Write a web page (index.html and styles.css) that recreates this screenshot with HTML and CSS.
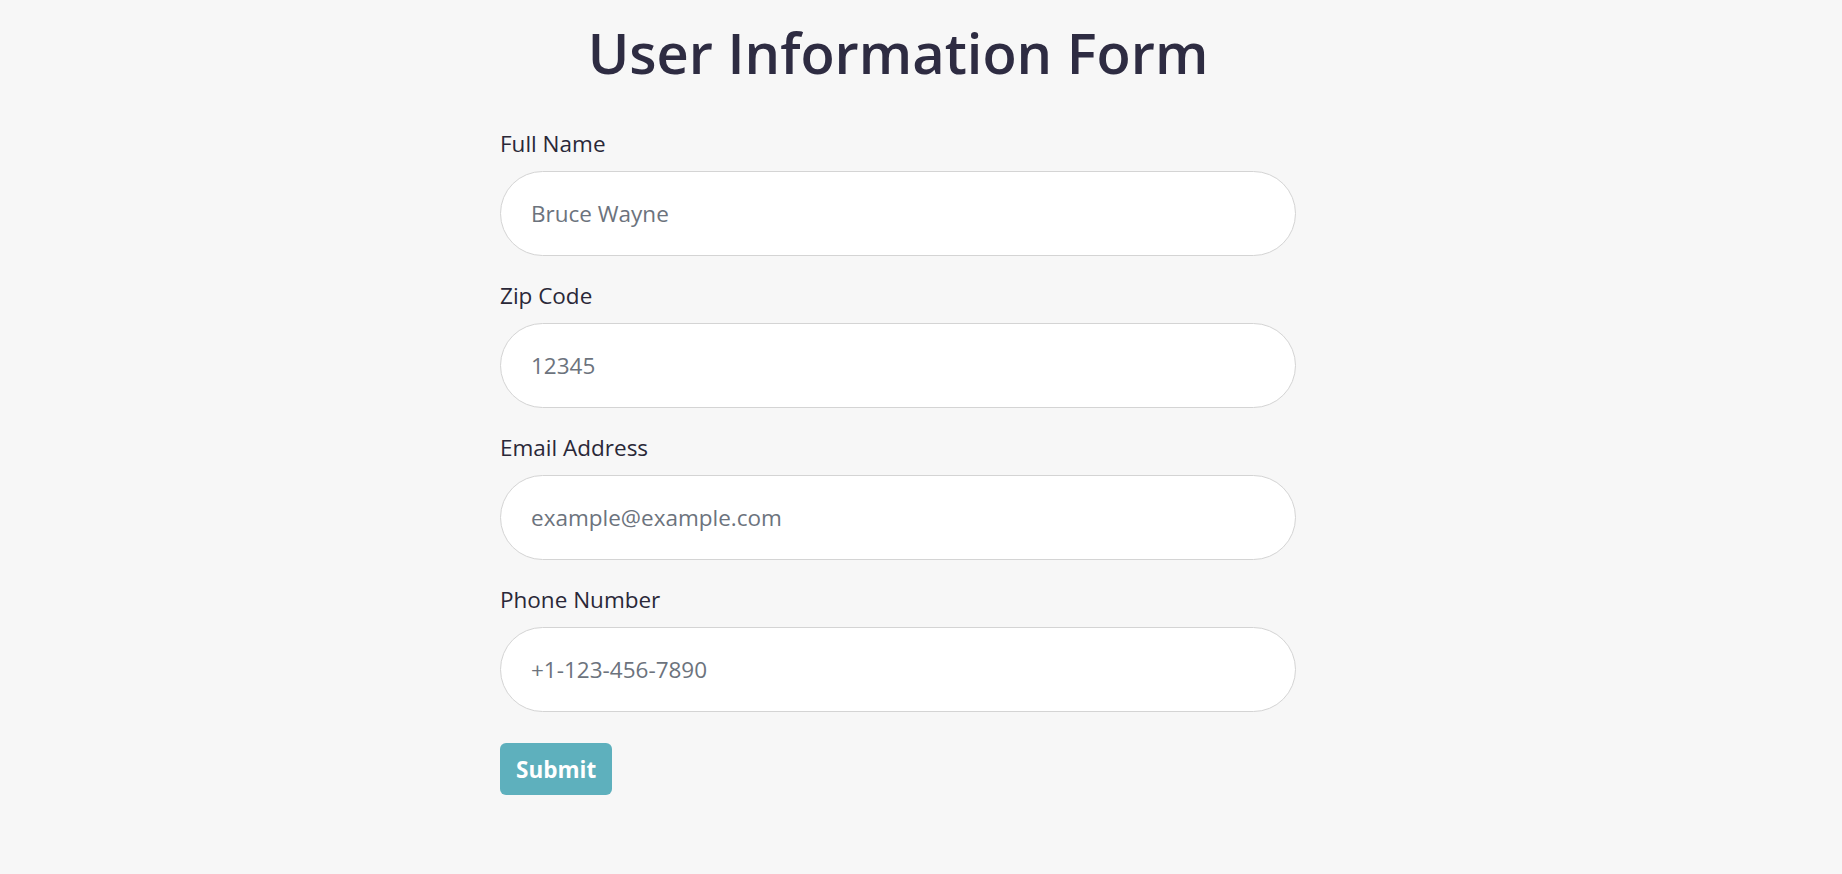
FILE: index.html
```html
<!DOCTYPE html>
<html lang="en">
<head>
<meta charset="utf-8">
<title>User Information Form</title>
<link rel="stylesheet" href="styles.css">
</head>
<body>
<main class="page">
  <h1 class="title">User Information Form</h1>
  <form class="form">
    <div class="field">
      <label class="label" for="name">Full Name</label>
      <input class="input" id="name" type="text" placeholder="Bruce Wayne">
    </div>
    <div class="field">
      <label class="label" for="zip">Zip Code</label>
      <input class="input" id="zip" type="text" placeholder="12345">
    </div>
    <div class="field">
      <label class="label" for="email">Email Address</label>
      <input class="input" id="email" type="email" placeholder="example@example.com">
    </div>
    <div class="field">
      <label class="label" for="phone">Phone Number</label>
      <input class="input" id="phone" type="tel" placeholder="+1-123-456-7890">
    </div>
    <button class="submit" type="submit">Submit</button>
  </form>
</main>
</body>
</html>
```

FILE: styles.css
```css
* { box-sizing: border-box; }
html, body { margin: 0; background: #f7f7f7; }
body {
  font-family: "Segoe UI", "Open Sans", sans-serif;
  color: #2a2838;
  padding-right: 46px;
}
.page {
  width: 796px;
  margin: 0 auto;
}
.title {
  margin: 0;
  padding-top: 12px;
  font-size: 56px;
  line-height: 80px;
  font-weight: 600;
  text-align: center;
  color: #2e2c42;
}
.form {
  margin-top: 37px;
  display: flex;
  flex-direction: column;
}
.field {
  display: flex;
  flex-direction: column;
}
.label {
  font-size: 22.5px;
  line-height: 30px;
  margin-bottom: 12px;
  color: #2a2838;
}
.input {
  height: 85px;
  border: 1px solid #d4d4d4;
  border-radius: 43px;
  background: #fff;
  padding: 0 30px;
  font-family: inherit;
  font-size: 22.5px;
  color: #333;
  margin-bottom: 25px;
  outline: none;
}
.input::placeholder { color: #6c737d; }
.submit {
  align-self: flex-start;
  margin-top: 6px;
  height: 52px;
  padding: 0 16px;
  border: none;
  border-radius: 6px;
  background: #5eb0bd;
  color: #fff;
  font-family: inherit;
  font-size: 22.5px;
  font-weight: 700;
}
```
